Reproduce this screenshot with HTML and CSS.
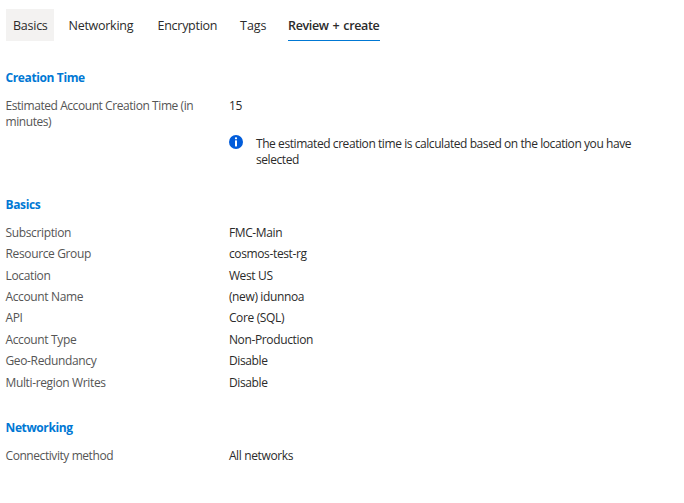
FILE: index.html
```html
<!DOCTYPE html>
<html lang="en">
<head>
<meta charset="utf-8">
<title>Review + create</title>
<link rel="stylesheet" href="styles.css">
</head>
<body>
<nav class="tabs">
<a class="tab hovered">Basics</a>
<a class="tab networking-tab">Networking</a>
<a class="tab encryption-tab">Encryption</a>
<a class="tab tags-tab">Tags</a>
<a class="tab active">Review + create</a>
</nav>
<main>
<section class="creation">
<h2>Creation Time</h2>
<dl>
<dt class="long">Estimated Account Creation Time (in<br>minutes)</dt><dd>15</dd>
</dl>
<div class="info">
<svg class="info-icon" viewBox="0 0 14 14"><circle cx="7" cy="7" r="7" fill="#015cda"/><circle cx="7" cy="3.3" r="1.15" fill="#fff"/><rect x="6" y="5.3" width="2" height="6.2" rx=".4" fill="#fff"/></svg>
<p class="long">The estimated creation time is calculated based on the location you have<br>selected</p>
</div>
</section>
<section class="basics">
<h2>Basics</h2>
<dl>
<dt>Subscription</dt><dd>FMC-Main</dd>
<dt>Resource Group</dt><dd>cosmos-test-rg</dd>
<dt>Location</dt><dd>West US</dd>
<dt>Account Name</dt><dd>(new) idunnoa</dd>
<dt>API</dt><dd>Core (SQL)</dd>
<dt>Account Type</dt><dd>Non-Production</dd>
<dt>Geo-Redundancy</dt><dd>Disable</dd>
<dt>Multi-region Writes</dt><dd>Disable</dd>
</dl>
</section>
<section class="networking">
<h2>Networking</h2>
<dl>
<dt class="long">Connectivity method</dt><dd>All networks</dd>
</dl>
</section>
</main>
</body>
</html>
```
FILE: styles.css
```css
* { box-sizing: border-box; margin: 0; padding: 0; }
body { width: 684px; height: 503px; overflow: hidden; background: #fff; color: #2b2b2b; font: 12px/16px "Open Sans", "Noto Sans", sans-serif; letter-spacing: -.36px; }
.tabs { display: flex; height: 41px; padding: 9px 0 0 6px; }
.tab { height: 32px; padding: 9px 0 0 7px; font-size: 12.5px; letter-spacing: -.27px; white-space: nowrap; }
.hovered { width: 48px; background: #f3f2f1; letter-spacing: -.25px; }
.networking-tab { width: 89px; padding-left: 14.5px; }
.encryption-tab { width: 83px; padding-left: 14.5px; }
.tags-tab { width: 62px; padding-left: 14px; letter-spacing: 0; }
.active { width: 92px; padding-left: 0; border-bottom: 1px solid #0078d4; font-weight: 600; letter-spacing: -.34px; word-spacing: 1px; }
main { padding-left: 5.5px; }
section { display: flow-root; }
h2 { font-size: 12px; line-height: 16px; font-weight: 700; letter-spacing: -.38px; color: #0078d4; }
.creation { height: 127px; padding-top: 29px; }
dl { display: grid; grid-template-columns: 223.4px 1fr; row-gap: 5.4px; margin-top: 11.85px; }
dt { color: #555; }
.long { letter-spacing: -.43px; }
.info { display: flex; gap: 13px; margin: 6.15px 0 0 223.5px; }
.info-icon { width: 14px; height: 14px; margin-top: -.5px; flex: none; }
.basics { padding-top: 29px; }
.networking { padding-top: 29.4px; }
```
